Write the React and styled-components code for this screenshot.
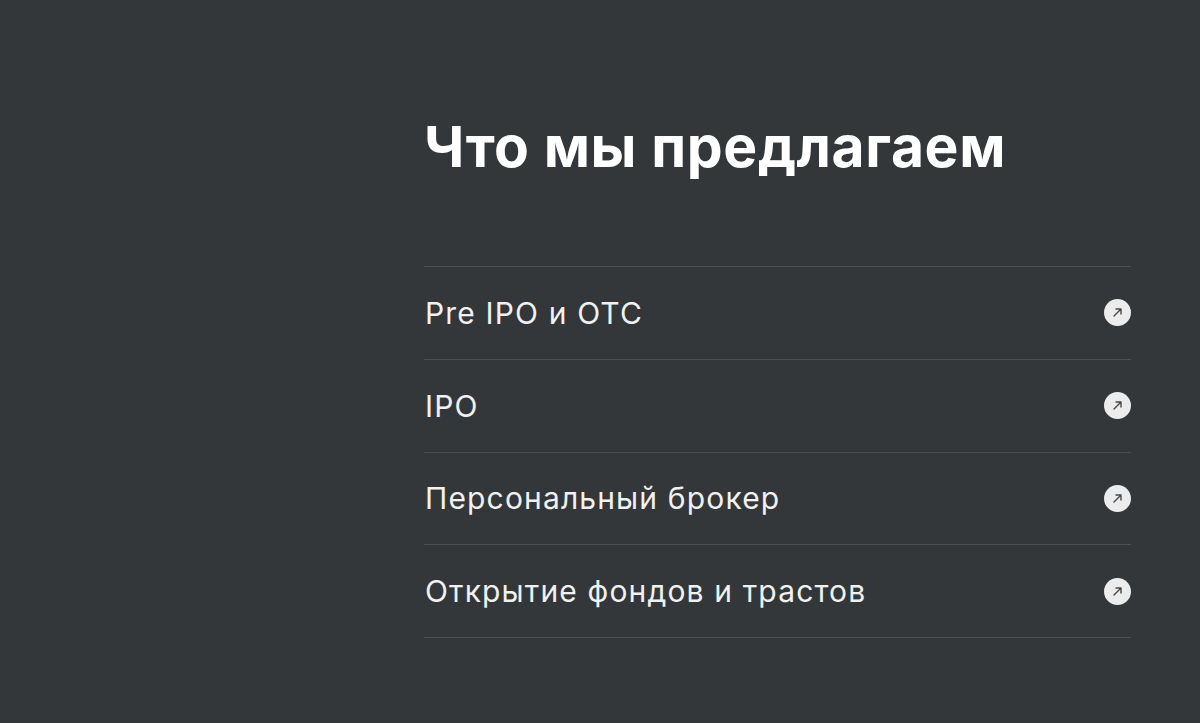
import styled, { createGlobalStyle } from "styled-components";

const GlobalStyle = createGlobalStyle`
  html, body {
    margin: 0;
    padding: 0;
    background: #33373a;
  }
  body {
    font-family: Inter, "Noto Sans", sans-serif;
    -webkit-font-smoothing: antialiased;
  }
`;

const Page = styled.div`
  min-height: 723px;
  background: #33373a;
  padding: 112px 69px 0 424px;
  box-sizing: border-box;
`;

const Title = styled.h2`
  margin: 0 0 84px;
  color: #ffffff;
  font-size: 57px;
  font-weight: 700;
  line-height: 70px;
  letter-spacing: 0.6px;
`;

const List = styled.ul`
  list-style: none;
  margin: 0;
  padding: 0;
  border-bottom: 1px solid #4b4f53;
`;

const Row = styled.li`
  display: flex;
  align-items: center;
  justify-content: space-between;
  height: 91.75px;
  border-top: 1px solid #4b4f53;
  color: #f1f1f1;
  font-size: 30px;
  font-weight: 400;
  letter-spacing: 1.15px;
  padding-left: 1px;
`;

const ArrowButton = styled.span`
  display: flex;
  align-items: center;
  justify-content: center;
  width: 27px;
  height: 27px;
  border-radius: 50%;
  background: #ececec;
`;

const Arrow = () => (
  <svg width="11" height="11" viewBox="0 0 11 11" fill="none">
    <path d="M2 9L9 2M4 2h5v5" stroke="#44484b" strokeWidth="1.4" strokeLinecap="round" strokeLinejoin="round" />
  </svg>
);

const items = ["Pre IPO и OTC", "IPO", "Персональный брокер", "Открытие фондов и трастов"];

export default function App() {
  return (
    <Page>
      <GlobalStyle />
      <Title>Что мы предлагаем</Title>
      <List>
        {items.map((item) => (
          <Row key={item}>
            <span>{item}</span>
            <ArrowButton>
              <Arrow />
            </ArrowButton>
          </Row>
        ))}
      </List>
    </Page>
  );
}
